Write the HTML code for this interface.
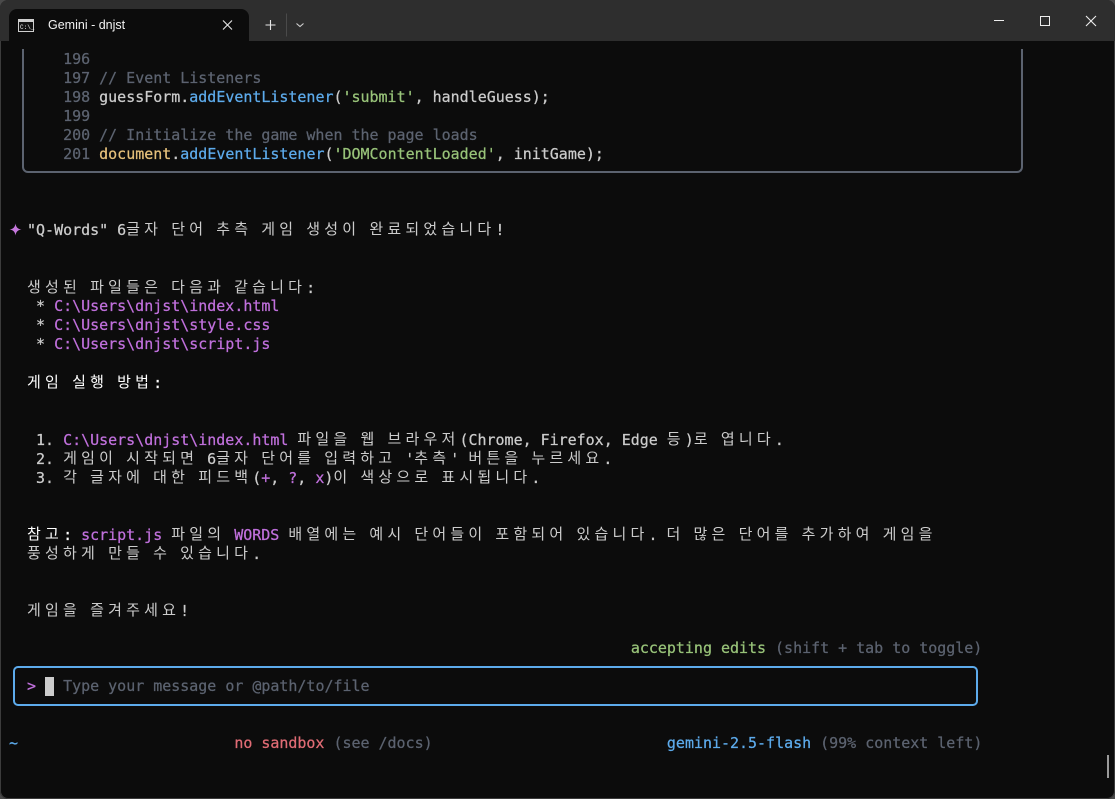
<!DOCTYPE html>
<html><head><meta charset="utf-8"><title>Gemini - dnjst</title>
<style>
html,body{margin:0;padding:0;width:1115px;height:799px;background:#4a4a4a;overflow:hidden}
#w{position:absolute;left:0;top:0;width:1115px;height:799px;background:#0c0c0c;border-radius:8px 8px 8px 8px;overflow:hidden;box-shadow:inset 0 0 0 1px #3c3c3c}
#t{position:absolute;left:0;top:0;width:1115px;height:41px;background:#2e2e2e}
#tab{position:absolute;left:9px;top:9px;width:240px;height:32px;background:#0c0c0c;border-radius:8px 8px 0 0}
#ttl{position:absolute;left:48px;top:17px;font:12.5px/16px "Liberation Sans",sans-serif;color:#f2f2f2;white-space:pre}
svg{position:absolute;left:0;top:0}
.r{position:absolute;left:0;height:19px;line-height:19px;font-family:"DejaVu Sans Mono","Liberation Mono",monospace;font-size:14.97px;color:#cccccc;white-space:pre;-webkit-text-stroke:0.25px currentColor}
.r i{font-family:"Noto Sans CJK KR","NanumGothic",sans-serif;font-style:normal;font-size:15px;letter-spacing:4.2px;line-height:19px;position:relative;top:-1px;-webkit-text-stroke:0}
.g{color:#5c6370}.p{color:#c070dc}.bl{color:#5dabec}.st{color:#98c379}.y{color:#e5c07b}.rd{color:#e06c75}.gn{color:#98c379}
.w{color:#fff}
#code{position:absolute;left:22px;top:49px;width:997px;height:122px;border:2px solid #5c6370;border-top:0;border-radius:0 0 6px 6px}
#inp{position:absolute;left:13px;top:666px;width:961px;height:36px;border:2px solid #5dabec;border-radius:5px}
#cur{position:absolute;left:45px;top:677px;width:9px;height:19px;background:#cccccc}
#sb{position:absolute;left:1107px;top:755px;width:2px;height:23px;background:#9a9a9a}
#star{position:absolute;left:9px;top:223px}
</style></head><body><div id="w">
<div id="t"></div><div id="tab"></div>
<svg width="1115" height="41" viewBox="0 0 1115 41">
<rect x="18.5" y="19.5" width="15" height="12" fill="#111" stroke="#cfcfcf"/><rect x="19" y="20" width="14" height="2" fill="#cfcfcf"/>
<text x="20" y="29" font-family="Liberation Mono" font-size="6" fill="#eee">C:\_</text>
<path d="M223 20.5L232 29.5M232 20.5L223 29.5" stroke="#e6e6e6" stroke-width="1.1" fill="none"/>
<path d="M265.5 25H275.5M270.5 20V30" stroke="#e6e6e6" stroke-width="1.1" fill="none"/>
<path d="M286.5 13.5V36.5" stroke="#4a4a4a" stroke-width="1"/>
<path d="M296.5 23.5L300 26.5L303.5 23.5" stroke="#d0d0d0" stroke-width="1.1" fill="none"/>
<path d="M994 20.5H1004" stroke="#eee" stroke-width="1"/>
<rect x="1040.5" y="16.5" width="9" height="9" fill="none" stroke="#eee" stroke-width="1"/>
<path d="M1086 16L1096 26M1096 16L1086 26" stroke="#eee" stroke-width="1.1" fill="none"/>
</svg>
<div id="ttl">Gemini - dnjst</div>
<div id="code"></div>

<div class="r" style="top:50px">       <span class="g">196</span></div>
<div class="r" style="top:69px">       <span class="g">197 // Event Listeners</span></div>
<div class="r" style="top:88px">       <span class="g">198 </span>guessForm.<span class="bl">addEventListener</span>(<span class="st">'submit'</span>, handleGuess);</div>
<div class="r" style="top:107px">       <span class="g">199</span></div>
<div class="r" style="top:126px">       <span class="g">200 // Initialize the game when the page loads</span></div>
<div class="r" style="top:145px">       <span class="g">201 </span><span class="y">document</span>.<span class="bl">addEventListener</span>(<span class="st">'DOMContentLoaded'</span>, initGame);</div>

<svg id="star" width="13" height="13" viewBox="0 0 13 13"><path d="M6.5 0.5C7 4 8.5 6 12.5 6.5C8.5 7 7 9 6.5 12.5C6 9 4.5 7 0.5 6.5C4.5 6 6 4 6.5 0.5Z" fill="#c678dd"/></svg>
<div class="r" style="top:220px">   "Q-Words" 6<i>글자</i> <i>단어</i> <i>추측</i> <i>게임</i> <i>생성이</i> <i>완료되었습니다</i>!</div>
<div class="r" style="top:278px">   <i>생성된</i> <i>파일들은</i> <i>다음과</i> <i>같습니다</i>:</div>
<div class="r" style="top:297px">    * <span class="p">C:\Users\dnjst\index.html</span></div>
<div class="r" style="top:316px">    * <span class="p">C:\Users\dnjst\style.css</span></div>
<div class="r" style="top:335px">    * <span class="p">C:\Users\dnjst\script.js</span></div>
<div class="r w" style="top:373px">   <i>게임</i> <i>실행</i> <i>방법</i>:</div>
<div class="r" style="top:430px">    1. <span class="p">C:\Users\dnjst\index.html</span> <i>파일을</i> <i>웹</i> <i>브라우저</i>(Chrome, Firefox, Edge <i>등</i>)<i>로</i> <i>엽니다</i>.</div>
<div class="r" style="top:449px">    2. <i>게임이</i> <i>시작되면</i> 6<i>글자</i> <i>단어를</i> <i>입력하고</i> '<i>추측</i>' <i>버튼을</i> <i>누르세요</i>.</div>
<div class="r" style="top:468px">    3. <i>각</i> <i>글자에</i> <i>대한</i> <i>피드백</i>(<span class="p">+</span>, <span class="p">?</span>, <span class="p">x</span>)<i>이</i> <i>색상으로</i> <i>표시됩니다</i>.</div>
<div class="r" style="top:525px">   <span class="w"><i>참고</i>:</span> <span class="p">script.js</span> <i>파일의</i> <span class="p">WORDS</span> <i>배열에는</i> <i>예시</i> <i>단어들이</i> <i>포함되어</i> <i>있습니다</i>. <i>더</i> <i>많은</i> <i>단어를</i> <i>추가하여</i> <i>게임을</i></div>
<div class="r" style="top:544px">   <i>풍성하게</i> <i>만들</i> <i>수</i> <i>있습니다</i>.</div>
<div class="r" style="top:601px">   <i>게임을</i> <i>즐겨주세요</i>!</div>
<div class="r" style="top:639px">                                                                      <span class="gn">accepting edits</span> <span class="g">(shift + tab to toggle)</span></div>

<div id="inp"></div><div id="cur"></div>
<div class="r" style="top:677px">   <span class="p">&gt;</span>   <span class="g">Type your message or @path/to/file</span></div>
<div class="r" style="top:734px"> <span class="bl">~</span>                        <span class="rd">no sandbox</span> <span class="g">(see /docs)</span>                          <span class="bl">gemini-2.5-flash</span> <span class="g">(99% context left)</span></div>
<div id="sb"></div>
</div></body></html>
